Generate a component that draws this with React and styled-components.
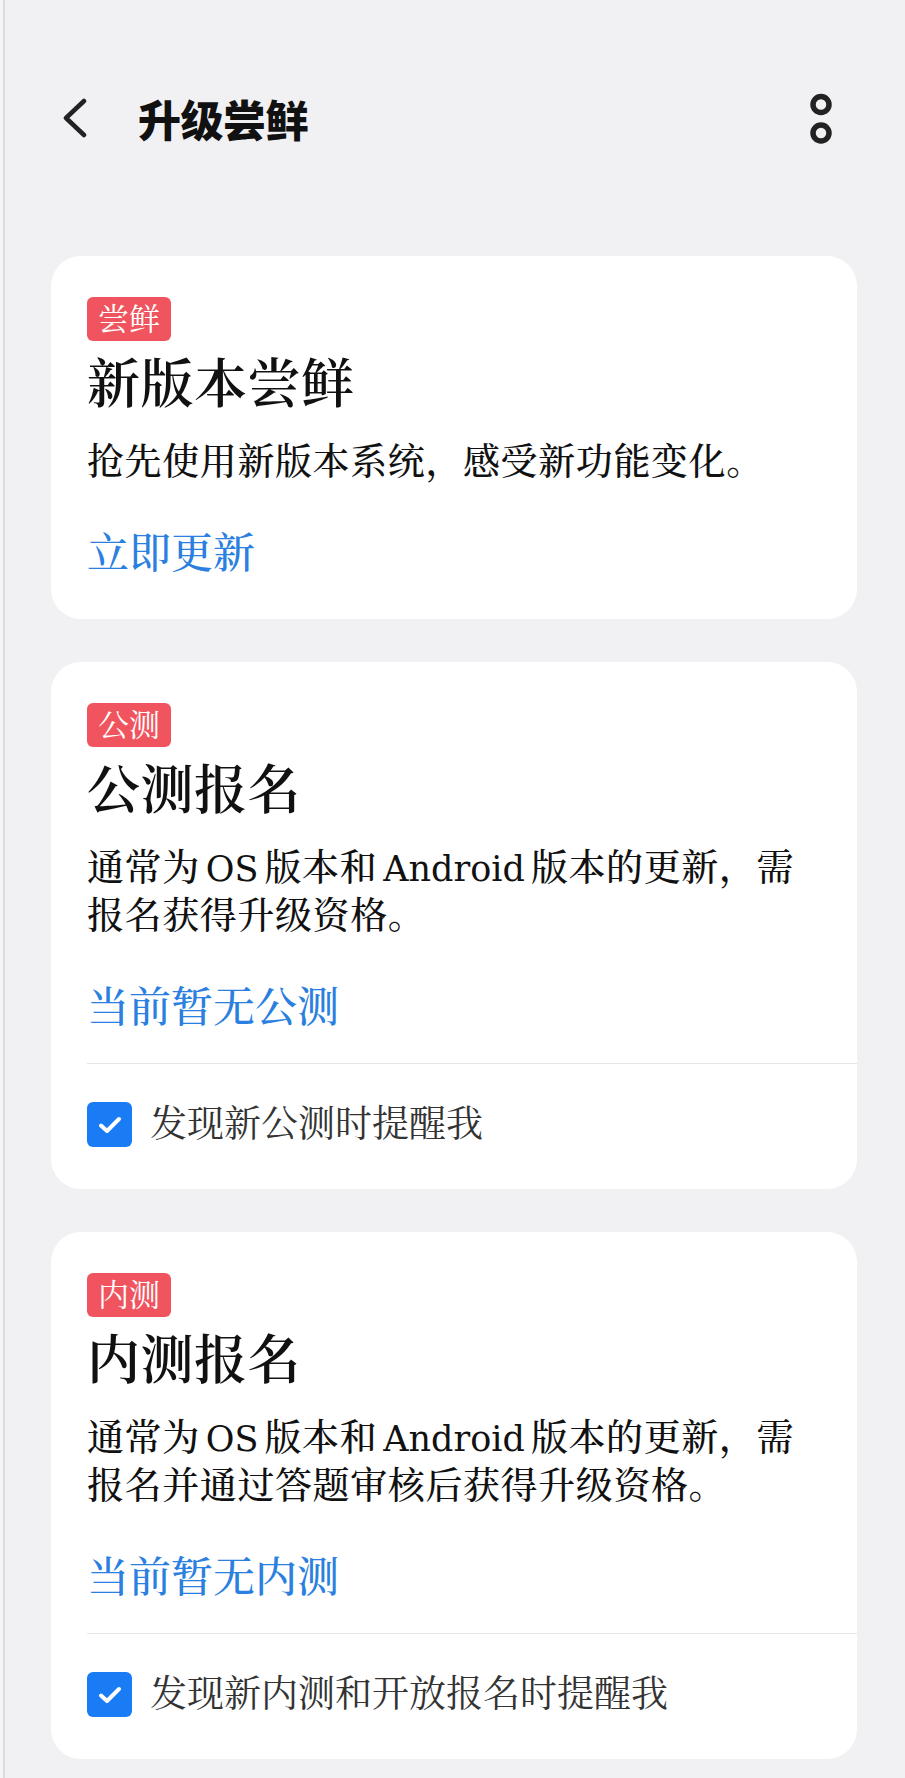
import styled, { createGlobalStyle } from "styled-components";

const GlobalStyle = createGlobalStyle`
  html, body {
    margin: 0;
    padding: 0;
    background: #f1f1f3;
  }
  * {
    box-sizing: border-box;
  }
`;

const serifStack = `"Liberation Serif", "Noto Serif CJK SC", "Noto Sans CJK SC", serif`;

// Page and header
const Page = styled.div`
  width: 905px;
  min-height: 1778px;
  background: linear-gradient(to right, #f4f4f6 0 3px, #dcdce0 3px 5px, #f1f1f3 5px);
  padding: 0 48px 40px 51px;
  font-family: ${serifStack};
  color: #111;
`;

const Header = styled.header`
  height: 256px;
  display: flex;
  align-items: flex-start;
  padding-top: 94px;
`;

const HeaderRow = styled.div`
  display: flex;
  align-items: center;
  width: 100%;
  height: 48px;
`;

const IconButton = styled.button`
  border: none;
  background: none;
  padding: 0;
  display: flex;
  align-items: center;
  justify-content: center;
  cursor: pointer;
`;

const BackButton = styled(IconButton)`
  width: 40px;
  height: 48px;
  margin-left: 6px;
`;

const PageTitle = styled.h1`
  margin: 0 0 0 41px;
  font-family: "Noto Sans CJK SC", sans-serif;
  font-weight: 900;
  font-size: 43px;
  letter-spacing: -0.5px;
  color: #111;
  flex: 1;
`;

const MoreButton = styled(IconButton)`
  width: 30px;
  height: 56px;
  margin-right: 21px;
`;

// Cards
const CardList = styled.div`
  display: flex;
  flex-direction: column;
  gap: 43px;
`;

const Card = styled.section`
  background: #fff;
  border-radius: 30px;
  padding: 41px 0 ${(p) => (p.$hasFooter ? "42px" : "37px")} 36px;
`;

const Badge = styled.span`
  display: inline-flex;
  align-items: center;
  height: 44px;
  padding: 0 11px;
  background: #f0545e;
  color: #fff;
  border-radius: 6px;
  font-size: 31px;
  line-height: 1;
`;

const CardTitle = styled.h2`
  margin: 12px 0 0;
  font-size: 53px;
  line-height: 64px;
  font-weight: 600;
  letter-spacing: 0.5px;
`;

const Description = styled.p`
  margin: 22px 44px 0 0;
  font-size: 37px;
  line-height: 47px;
  font-weight: 500;
  letter-spacing: 0.6px;
  color: #111;
`;

const Latin = styled.span`
  font-family: "DejaVu Serif", serif;
  font-size: 35px;
  font-weight: 400;
  letter-spacing: 0;
  margin: 0 6px;
`;

const ActionLink = styled.a`
  display: block;
  margin-top: 40px;
  font-size: 42px;
  line-height: 56px;
  font-weight: 500;
  color: #2a7fdf;
  text-decoration: none;
  cursor: pointer;
`;

const Divider = styled.hr`
  border: none;
  border-top: 1.5px solid #e6e6e8;
  margin: 27px 0 0;
`;

const CheckRow = styled.label`
  display: flex;
  align-items: center;
  gap: 18px;
  margin-top: 38px;
  height: 45px;
  cursor: pointer;
`;

const CheckBox = styled.span`
  width: 45px;
  height: 45px;
  border-radius: 6px;
  background: #1a7cf5;
  display: flex;
  align-items: center;
  justify-content: center;
  flex-shrink: 0;
`;

const CheckLabel = styled.span`
  font-size: 37px;
  line-height: 45px;
  color: #333;
`;

function BackIcon() {
  return (
    <svg width="30" height="40" viewBox="0 0 30 40">
      <path
        d="M22 3 L4 20 L22 37"
        fill="none"
        stroke="#222"
        strokeWidth="4.5"
        strokeLinecap="round"
        strokeLinejoin="round"
      />
    </svg>
  );
}

function MoreIcon() {
  return (
    <svg width="30" height="56" viewBox="0 0 30 56">
      <circle cx="15" cy="14.5" r="8" fill="none" stroke="#222" strokeWidth="5.5" />
      <circle cx="15" cy="43" r="8" fill="none" stroke="#222" strokeWidth="5.5" />
    </svg>
  );
}

function CheckIcon() {
  return (
    <svg width="26" height="20" viewBox="0 0 26 20">
      <path
        d="M4 10.5 L10 16 L22 4"
        fill="none"
        stroke="#fff"
        strokeWidth="4"
        strokeLinecap="round"
        strokeLinejoin="round"
      />
    </svg>
  );
}

// wraps latin words so they get their own font
function MixedText({ text }) {
  return text
    .split(/([A-Za-z]+)/)
    .map((part, i) => (/^[A-Za-z]+$/.test(part) ? <Latin key={i}>{part}</Latin> : part));
}

const cards = [
  {
    badge: "尝鲜",
    title: "新版本尝鲜",
    desc: "抢先使用新版本系统，感受新功能变化。",
    action: "立即更新",
  },
  {
    badge: "公测",
    title: "公测报名",
    desc: "通常为OS版本和Android版本的更新，需报名获得升级资格。",
    action: "当前暂无公测",
    remind: "发现新公测时提醒我",
  },
  {
    badge: "内测",
    title: "内测报名",
    desc: "通常为OS版本和Android版本的更新，需报名并通过答题审核后获得升级资格。",
    action: "当前暂无内测",
    remind: "发现新内测和开放报名时提醒我",
  },
];

export default function App() {
  return (
    <>
      <GlobalStyle />
      <Page>
        <Header>
          <HeaderRow>
            <BackButton aria-label="返回">
              <BackIcon />
            </BackButton>
            <PageTitle>升级尝鲜</PageTitle>
            <MoreButton aria-label="更多">
              <MoreIcon />
            </MoreButton>
          </HeaderRow>
        </Header>

        <CardList>
          {cards.map((c) => (
            <Card key={c.badge} $hasFooter={!!c.remind}>
              <Badge>{c.badge}</Badge>
              <CardTitle>{c.title}</CardTitle>
              <Description>
                <MixedText text={c.desc} />
              </Description>
              <ActionLink>{c.action}</ActionLink>
              {c.remind && (
                <>
                  <Divider />
                  <CheckRow>
                    <CheckBox>
                      <CheckIcon />
                    </CheckBox>
                    <CheckLabel>{c.remind}</CheckLabel>
                  </CheckRow>
                </>
              )}
            </Card>
          ))}
        </CardList>
      </Page>
    </>
  );
}
